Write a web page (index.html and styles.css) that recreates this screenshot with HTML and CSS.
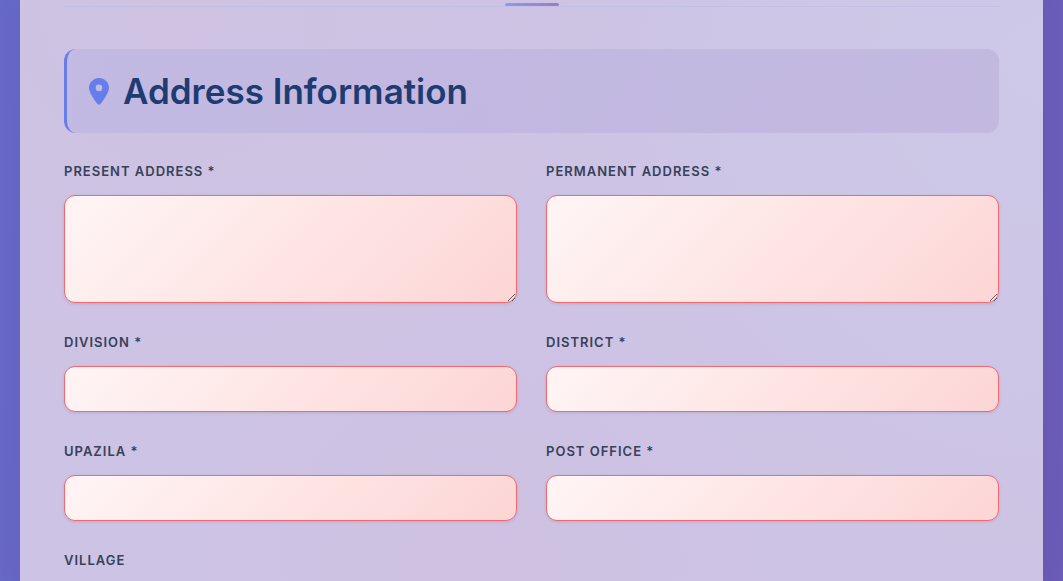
FILE: index.html
```html
<!DOCTYPE html>
<html lang="en">

<head>
    <meta charset="UTF-8">
    <meta name="viewport" content="width=device-width, initial-scale=1.0">
    <title>Address Information</title>
    <link rel="stylesheet" href="styles.css">
</head>

<body>
    <main class="container">
        <div class="form-header"></div>

        <form class="form">
            <div class="section-header">
                <svg class="section-icon" viewBox="0 0 20 27" aria-hidden="true">
                    <path fill-rule="evenodd" d="M10 0C4.500 0 0 4.400 0 9.900c0 4.500 5.900 12.900 8.700 16.200.7.8 1.900.8 2.600 0C14.100 22.800 20 14.400 20 9.900 20 4.400 15.500 0 10 0zm0 6.600a3.300 3.300 0 1 1 0 6.600 3.300 3.300 0 0 1 0-6.600z"/>
                </svg>
                <h2>Address Information</h2>
            </div>

            <div class="form-grid">
                <div class="form-group">
                    <label for="presentAddress">Present Address *</label>
                    <textarea id="presentAddress" name="presentAddress" required></textarea>
                </div>
                <div class="form-group">
                    <label for="permanentAddress">Permanent Address *</label>
                    <textarea id="permanentAddress" name="permanentAddress" required></textarea>
                </div>

                <div class="form-group">
                    <label for="division">Division *</label>
                    <input type="text" id="division" name="division" required>
                </div>
                <div class="form-group">
                    <label for="district">District *</label>
                    <input type="text" id="district" name="district" required>
                </div>

                <div class="form-group">
                    <label for="upazila">Upazila *</label>
                    <input type="text" id="upazila" name="upazila" required>
                </div>
                <div class="form-group">
                    <label for="postOffice">Post Office *</label>
                    <input type="text" id="postOffice" name="postOffice" required>
                </div>

                <div class="form-group">
                    <label for="village">Village</label>
                    <input type="text" id="village" name="village">
                </div>
            </div>
        </form>
    </main>
</body>

</html>
```

FILE: styles.css
```css
* {
    margin: 0;
    padding: 0;
    box-sizing: border-box;
}

body {
    font-family: Inter, "Liberation Sans", sans-serif;
    padding: 0 20px;
    background: linear-gradient(100deg, #6769c8 0%, #6b5cb8 100%);
}

/* the panel scrolls, the page behind it stays still */
.container {
    height: 100vh;
    overflow-y: auto;
    scrollbar-width: none;
    padding: 3px 44px 44px;
    background:
        radial-gradient(circle at 15% 0%, rgba(212, 192, 220, 0.3), transparent 40%),
        radial-gradient(circle at 100% 10%, rgba(206, 202, 233, 0.8), transparent 50%),
        radial-gradient(circle at 45% 100%, rgba(208, 190, 222, 0.4), transparent 35%),
        #cdc3e4;
    box-shadow: 0 0 20px rgba(60, 40, 130, 0.1);
}

.form-header {
    margin-bottom: 42px;
    border-bottom: 1px solid #c3c0e6;
}

.form-header::after {
    content: "";
    display: block;
    width: 54px;
    height: 3px;
    margin: 0 auto;
    border-radius: 2px;
    background: linear-gradient(90deg, #9199e6, #9a7dbd);
}

.section-header {
    display: flex;
    align-items: center;
    gap: 14px;
    margin-bottom: 27px;
    padding: 20px 22px;
    border-left: 3px solid #667eea;
    border-radius: 12px;
    background: linear-gradient(135deg, rgba(102, 126, 234, 0.12), rgba(118, 75, 162, 0.12));
}

.section-header h2 {
    font-size: 35px;
    font-weight: 600;
    line-height: 44px;
    color: #1e3c72;
}

.section-icon {
    width: 20px;
    height: 27px;
    fill: #667eea;
}

.form-grid {
    display: grid;
    grid-template-columns: repeat(2, 1fr);
    gap: 28px 29px;
}

.form-group {
    display: flex;
    flex-direction: column;
}

.form-group label {
    margin-bottom: 13px;
    font-size: 13px;
    font-weight: 600;
    line-height: 22px;
    letter-spacing: 1px;
    text-transform: uppercase;
    color: #374158;
}

.form-group input,
.form-group textarea {
    width: 100%;
    height: 46px;
    padding: 12px 16px;
    font-family: inherit;
    font-size: 14px;
    border: 1px solid #f2696f;
    border-radius: 11px;
    background: linear-gradient(135deg, #fff5f5 0%, #fee2e2 60%, #fdd5d5 100%);
    box-shadow: 0 1px 3px rgba(80, 40, 100, 0.15);
}

.form-group textarea {
    height: 108px;
    resize: vertical;
}
```
